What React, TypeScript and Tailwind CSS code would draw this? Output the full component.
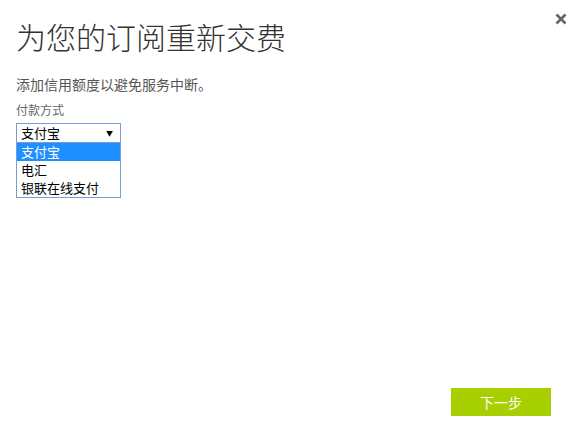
import React from "react";

const font = { fontFamily: '"Noto Sans CJK SC", "Noto Sans", sans-serif' };

export default function App() {
  return (
    <div className="relative w-[574px] h-[427px] bg-white overflow-hidden" style={font}>
      <button className="absolute left-[553px] top-[11px] w-[16px] h-[16px] flex items-center justify-center">
        <svg width="12" height="12" viewBox="0 0 12 12">
          <path d="M1.5 1.5 L10.5 10.5 M10.5 1.5 L1.5 10.5" stroke="#666" strokeWidth="2.6" strokeLinecap="butt" />
        </svg>
      </button>
      <div className="flex flex-col h-full px-[16px]">
        <h1 className="mt-[18px] text-[30px] leading-[36px] font-light text-[#333]">为您的订阅重新交费</h1>
        <p className="mt-[21px] text-[14px] leading-[19px] text-[#555]">添加信用额度以避免服务中断。</p>
        <p className="mt-[8px] text-[12px] leading-[16px] text-[#666]">付款方式</p>
        <div className="relative mt-[5px] w-[105px]">
          <div className="h-[20px] border border-[#7a9cd3] flex items-center justify-between pl-[4px] pr-[7px] text-[13px] text-black">
            <span className="leading-[18px]">支付宝</span>
            <span className="text-[7px] leading-[8px]">▼</span>
          </div>
          <div className="border border-t-0 border-[#7a9cd3] text-[13px] text-black">
            <div className="h-[18px] leading-[18px] pl-[4px] bg-[#1e90ff] text-white">支付宝</div>
            <div className="h-[18px] leading-[18px] pl-[4px]">电汇</div>
            <div className="h-[18px] leading-[18px] pl-[4px]">银联在线支付</div>
          </div>
        </div>
        <div className="flex-1" />
        <div className="flex justify-end pr-[7px] mb-[11px]">
          <button className="w-[100px] h-[28px] bg-[#a8cf00] text-white text-[14px] leading-[28px]">下一步</button>
        </div>
      </div>
    </div>
  );
}
